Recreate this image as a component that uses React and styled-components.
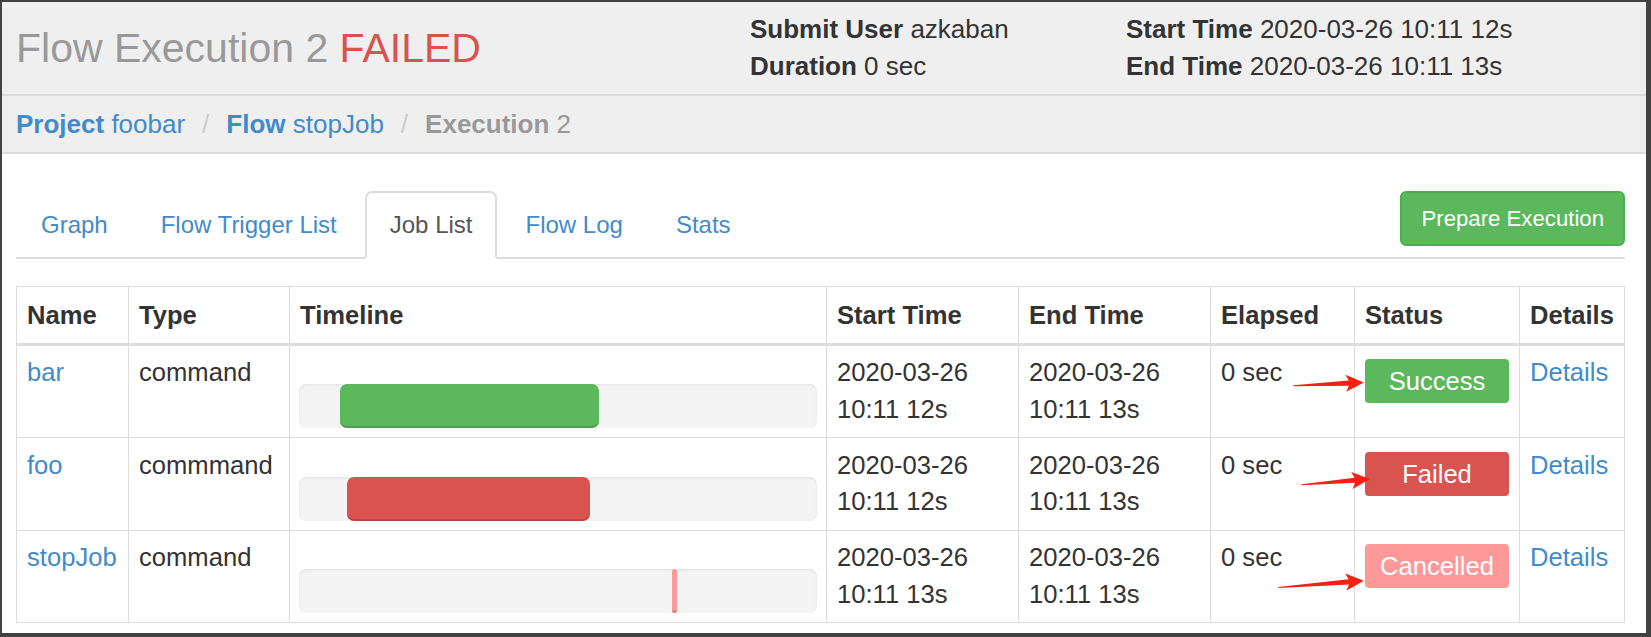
import styled, { createGlobalStyle } from "styled-components";

const GlobalStyle = createGlobalStyle`
  * { box-sizing: border-box; }
  html, body {
    margin: 0;
    padding: 0;
    background: #414141;
  }
  body {
    font-family: "Liberation Sans", Arial, sans-serif;
    font-size: 25.6px;
    line-height: 36.6px;
    color: #333;
  }
`;

const jobs = [
  {
    name: "bar",
    type: "command",
    start: "2020-03-26 10:11 12s",
    end: "2020-03-26 10:11 13s",
    elapsed: "0 sec",
    status: "success",
    label: "Success",
    left: 7.84,
    width: 50.1,
    tail: [-61.8, 39.7],
    tip: [8.8, 36.4],
  },
  {
    name: "foo",
    type: "commmand",
    start: "2020-03-26 10:11 12s",
    end: "2020-03-26 10:11 13s",
    elapsed: "0 sec",
    status: "failed",
    label: "Failed",
    left: 9.19,
    width: 47.0,
    tail: [-53.5, 46.7],
    tip: [14.8, 41],
  },
  {
    name: "stopJob",
    type: "command",
    start: "2020-03-26 10:11 13s",
    end: "2020-03-26 10:11 13s",
    elapsed: "0 sec",
    status: "cancelled",
    label: "Cancelled",
    left: 72.0,
    width: null,
    tail: [-76.8, 56.4],
    tip: [8.8, 49.7],
  },
];

const statusColors = {
  success: "#5cb85c",
  failed: "#d9534f",
  cancelled: "#ff9999",
};

const columns = [
  ["Name", 112],
  ["Type", 161],
  ["Timeline", 537],
  ["Start Time", 192],
  ["End Time", 192],
  ["Elapsed", 144],
  ["Status", 165],
  ["Details", 105],
];

const tabs = ["Graph", "Flow Trigger List", "Job List", "Flow Log", "Stats"];

// red annotation arrow, thin at the tail and wide at the head
const ARROW_OFFSET = 100;
function arrowPoints([tx, ty], [px, py]) {
  tx += ARROW_OFFSET;
  px += ARROW_OFFSET;
  const dx = px - tx;
  const dy = py - ty;
  const len = Math.hypot(dx, dy);
  const ux = dx / len;
  const uy = dy / len;
  const nx = -uy;
  const ny = ux;
  const bx = px - ux * 17;
  const by = py - uy * 17;
  const pt = (x, y) => `${x.toFixed(1)},${y.toFixed(1)}`;
  return [
    pt(tx + nx * 0.5, ty + ny * 0.5),
    pt(bx + ux * 2 + nx * 2.6, by + uy * 2 + ny * 2.6),
    pt(bx - ux * 1 + nx * 8.5, by - uy * 1 + ny * 8.5),
    pt(px, py),
    pt(bx - ux * 1 - nx * 8.5, by - uy * 1 - ny * 8.5),
    pt(bx + ux * 2 - nx * 2.6, by + uy * 2 - ny * 2.6),
    pt(tx - nx * 0.5, ty - ny * 0.5),
  ].join(" ");
}

function Arrow({ tail, tip }) {
  return (
    <ArrowSvg viewBox="0 0 130 92" width="130" height="92">
      <polygon points={arrowPoints(tail, tip)} fill="#fb1e12" />
    </ArrowSvg>
  );
}

export default function App() {
  return (
    <Frame>
      <GlobalStyle />
      <PageHeader>
        <Title>
          Flow Execution 2 <Failed>FAILED</Failed>
        </Title>
        <Info>
          <div>
            <b>Submit User</b> azkaban
          </div>
          <div>
            <b>Duration</b> 0 sec
          </div>
        </Info>
        <Info>
          <div>
            <b>Start Time</b> 2020-03-26 10:11 12s
          </div>
          <div>
            <b>End Time</b> 2020-03-26 10:11 13s
          </div>
        </Info>
      </PageHeader>

      <Breadcrumb>
        <Crumb href="#">
          <b>Project</b> foobar
        </Crumb>
        <Slash>/</Slash>
        <Crumb href="#">
          <b>Flow</b> stopJob
        </Crumb>
        <Slash>/</Slash>
        <Crumb as="span" $current>
          <b>Execution</b> 2
        </Crumb>
      </Breadcrumb>

      <Content>
        <TabBar>
          {tabs.map((t) => (
            <Tab key={t} href="#" $active={t === "Job List"}>
              {t}
            </Tab>
          ))}
          <PrimaryButton>Prepare Execution</PrimaryButton>
        </TabBar>

        <JobTable>
          <colgroup>
            {columns.map(([name, w]) => (
              <Col key={name} $w={w} />
            ))}
          </colgroup>
          <thead>
            <tr>
              {columns.map(([name]) => (
                <Th key={name}>{name}</Th>
              ))}
            </tr>
          </thead>
          <tbody>
            {jobs.map((job) => (
              <tr key={job.name}>
                <Td>
                  <Link href="#">{job.name}</Link>
                </Td>
                <Td>{job.type}</Td>
                <Td $timeline>
                  <Track>
                    <Bar
                      $color={statusColors[job.status]}
                      $thin={job.width === null}
                      style={{
                        marginLeft: `${job.left}%`,
                        width: job.width === null ? undefined : `${job.width}%`,
                      }}
                    />
                  </Track>
                </Td>
                <Td>{job.start}</Td>
                <Td>{job.end}</Td>
                <Td>{job.elapsed}</Td>
                <Td>
                  <StatusBadge $color={statusColors[job.status]}>{job.label}</StatusBadge>
                  <Arrow tail={job.tail} tip={job.tip} />
                </Td>
                <Td>
                  <Link href="#">Details</Link>
                </Td>
              </tr>
            ))}
          </tbody>
        </JobTable>
      </Content>
    </Frame>
  );
}

const Frame = styled.div`
  height: 637px;
  overflow: hidden;
  background: #fff;
  border-style: solid;
  border-color: #414141;
  border-width: 2px 5px 4px 2px;
`;

const PageHeader = styled.header`
  display: grid;
  grid-template-columns: 736px 376px 1fr;
  height: 94px;
  padding: 0 12px;
  font-size: 26px;
  background: #efefef;
  border-bottom: 2px solid #dddddd;
`;

const Title = styled.h1`
  align-self: center;
  margin: 0 0 0 2px;
  font-size: 41px;
  line-height: 46px;
  font-weight: normal;
  color: #999999;
`;

const Failed = styled.span`
  color: #d9534f;
`;

const Info = styled.div`
  padding-top: 9px;
  white-space: nowrap;

  b {
    font-weight: bold;
  }
`;

const Breadcrumb = styled.nav`
  display: flex;
  align-items: center;
  height: 58px;
  padding: 0 14px;
  font-size: 26px;
  background: #efefef;
  border-bottom: 2px solid #dddddd;
`;

const Crumb = styled.a`
  color: ${(p) => (p.$current ? "#999999" : "#428bca")};
  text-decoration: none;
  white-space: pre;
`;

const Slash = styled.span`
  margin: 0 17px;
  color: #cccccc;
`;

const Content = styled.main`
  padding: 37px 21px 0 14px;
`;

const TabBar = styled.div`
  display: flex;
  align-items: flex-start;
  border-bottom: 2px solid #dddddd;
`;

const Tab = styled.a`
  display: block;
  margin: 0 3px -2px 0;
  padding: 15px 23px;
  font-size: 24px;
  line-height: 34px;
  text-decoration: none;
  color: ${(p) => (p.$active ? "#555555" : "#428bca")};
  background: ${(p) => (p.$active ? "#ffffff" : "transparent")};
  border: 2px solid ${(p) => (p.$active ? "#dddddd" : "transparent")};
  border-bottom-color: transparent;
  border-radius: 7px 7px 0 0;
`;

const PrimaryButton = styled.button`
  margin-left: auto;
  height: 55px;
  padding: 0 19px;
  font-family: inherit;
  font-size: 22.2px;
  color: #ffffff;
  background: #5cb85c;
  border: 2px solid #4cae4c;
  border-radius: 6px;
`;

const JobTable = styled.table`
  margin-top: 27px;
  width: 1608px;
  table-layout: fixed;
  border-collapse: collapse;
  border: 1px solid #dddddd;
`;

const Col = styled.col`
  width: ${(p) => p.$w}px;
`;

const Th = styled.th`
  padding: 9.5px 10px;
  text-align: left;
  vertical-align: bottom;
  font-weight: bold;
  border: 1px solid #dddddd;
  border-bottom: 3px solid #dddddd;
`;

const Td = styled.td`
  position: relative;
  padding: ${(p) => (p.$timeline ? "8.5px 9px 9px" : "8.5px 10px 9px")};
  vertical-align: top;
  border: 1px solid #dddddd;
`;

const Link = styled.a`
  color: #428bca;
  text-decoration: none;
`;

const Track = styled.div`
  display: flex;
  height: 44px;
  margin-top: 30px;
  background: #f4f4f4;
  border-radius: 7px;
  box-shadow: inset 0 1px 3px rgba(0, 0, 0, 0.08);
`;

const Bar = styled.div`
  flex: none;
  width: ${(p) => (p.$thin ? "5px" : "auto")};
  height: 100%;
  background: ${(p) => p.$color};
  border-radius: ${(p) => (p.$thin ? "3px" : "7px")};
  box-shadow: inset 0 -2px 0 rgba(0, 0, 0, 0.15);
`;

const StatusBadge = styled.div`
  margin-top: 5px;
  height: 44px;
  line-height: 44px;
  text-align: center;
  color: #ffffff;
  background: ${(p) => p.$color};
  border-radius: 4px;
`;

const ArrowSvg = styled.svg`
  position: absolute;
  left: -${ARROW_OFFSET}px;
  top: 0;
  overflow: visible;
  pointer-events: none;
  z-index: 2;
`;
